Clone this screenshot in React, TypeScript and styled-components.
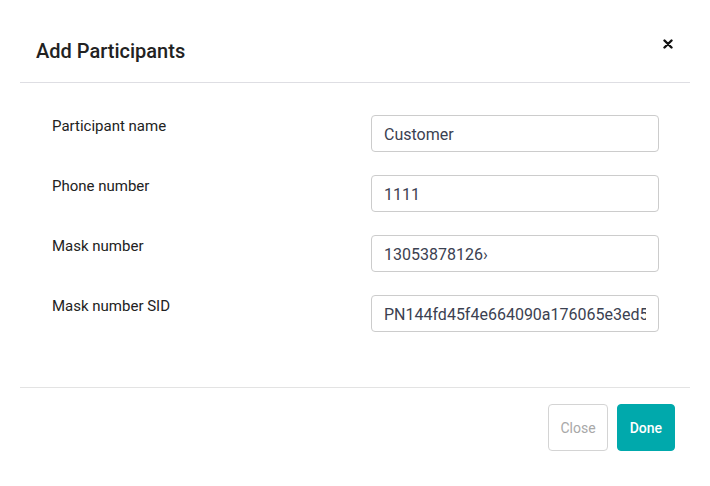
import React from 'react';
import styled, { createGlobalStyle } from 'styled-components';

const GlobalStyle = createGlobalStyle`
  html, body {
    margin: 0;
    padding: 0;
    background: #ffffff;
  }
  body {
    font-family: 'Roboto', 'Liberation Sans', sans-serif;
    -webkit-font-smoothing: antialiased;
  }
`;

const Modal = styled.div`
  width: 710px;
  height: 486px;
  padding: 0 20px;
  box-sizing: border-box;
  background: #ffffff;
  display: flex;
  flex-direction: column;
`;

const Header = styled.div`
  display: flex;
  justify-content: space-between;
  align-items: flex-start;
  padding: 39px 16px 19px 16px;
  border-bottom: 1px solid #dedee3;
`;

const Title = styled.h2`
  margin: 0;
  font-size: 20px;
  line-height: 24px;
  font-weight: 500;
  color: #222222;
`;

const CloseIcon = styled.button`
  border: none;
  background: none;
  padding: 0;
  margin-top: -1px;
  width: 12px;
  height: 12px;
  display: flex;
  align-items: center;
  justify-content: center;
  cursor: pointer;
`;

const Body = styled.div`
  display: flex;
  flex-direction: column;
  gap: 23px;
  padding: 32px 31px 55px 32px;
  border-bottom: 1px solid #e3e3e3;
`;

const Row = styled.div`
  display: flex;
  justify-content: space-between;
  align-items: flex-start;
`;

const Label = styled.label`
  font-size: 15px;
  line-height: 20px;
  margin-top: 1px;
  color: #222222;
`;

const Input = styled.input`
  width: 288px;
  height: 37px;
  box-sizing: border-box;
  border: 1px solid #cccccc;
  border-radius: 4px;
  padding: 1px 12px 0 12px;
  font-family: 'Roboto', 'Liberation Sans', sans-serif;
  font-size: 16px;
  color: #3b4151;
  outline: none;
`;

const Footer = styled.div`
  display: flex;
  justify-content: flex-end;
  gap: 9px;
  padding: 16px 15px 0 0;
`;

const Button = styled.button<{ $primary?: boolean }>`
  height: 47px;
  padding: 0 ${({ $primary }) => ($primary ? '12px' : '11px')};
  border-radius: 4px;
  font-family: 'Roboto', 'Liberation Sans', sans-serif;
  font-size: 14px;
  font-weight: ${({ $primary }) => ($primary ? 500 : 400)};
  cursor: pointer;
  border: 1px solid ${({ $primary }) => ($primary ? '#00a9ac' : '#d4d4d4')};
  background: ${({ $primary }) => ($primary ? '#00a9ac' : '#ffffff')};
  color: ${({ $primary }) => ($primary ? '#ffffff' : '#a8a8a8')};
`;

const fields = [
  { label: 'Participant name', value: 'Customer' },
  { label: 'Phone number', value: '1111' },
  { label: 'Mask number', value: '13053878126›' },
  { label: 'Mask number SID', value: 'PN144fd45f4e664090a176065e3ed5' },
];

const App: React.FC = () => (
  <>
    <GlobalStyle />
    <Modal>
      <Header>
        <Title>Add Participants</Title>
        <CloseIcon aria-label="Close">
          <svg width="10" height="10" viewBox="0 0 10 10">
            <path d="M1.5 1.5 L8.5 8.5 M8.5 1.5 L1.5 8.5" stroke="#111" strokeWidth="2.4" strokeLinecap="round" />
          </svg>
        </CloseIcon>
      </Header>
      <Body>
        {fields.map((f) => (
          <Row key={f.label}>
            <Label>{f.label}</Label>
            <Input defaultValue={f.value} readOnly />
          </Row>
        ))}
      </Body>
      <Footer>
        <Button>Close</Button>
        <Button $primary>Done</Button>
      </Footer>
    </Modal>
  </>
);

export default App;
